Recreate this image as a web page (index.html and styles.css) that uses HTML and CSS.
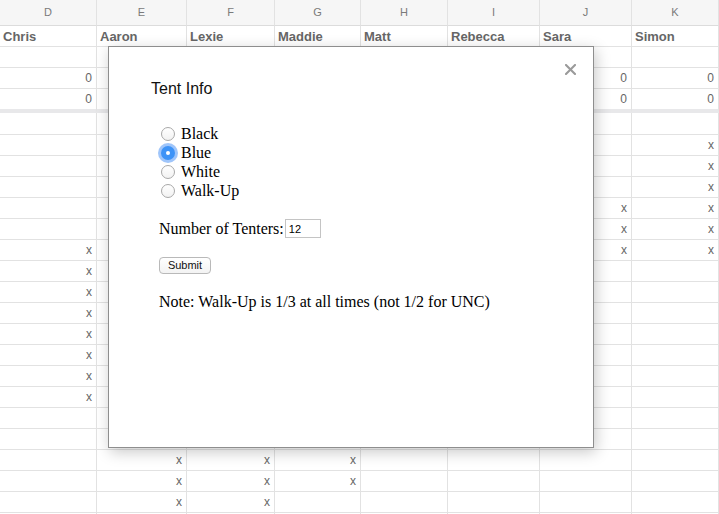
FILE: index.html
```html
<!DOCTYPE html>
<html>
<head>
<meta charset="utf-8">
<link rel="stylesheet" href="styles.css">
</head>
<body>
<div class="sheet">
  <div class="row head">
    <div class="c">D</div><div class="c">E</div><div class="c">F</div><div class="c">G</div><div class="c">H</div><div class="c">I</div><div class="c">J</div><div class="c">K</div>
  </div>
  <div class="row names">
    <div class="c">Chris</div><div class="c">Aaron</div><div class="c">Lexie</div><div class="c">Maddie</div><div class="c">Matt</div><div class="c">Rebecca</div><div class="c">Sara</div><div class="c">Simon</div>
  </div>
  <div class="row"><div class="c"></div><div class="c"></div><div class="c"></div><div class="c"></div><div class="c"></div><div class="c"></div><div class="c"></div><div class="c"></div></div>
  <div class="row"><div class="c">0</div><div class="c"></div><div class="c"></div><div class="c"></div><div class="c"></div><div class="c"></div><div class="c">0</div><div class="c">0</div></div>
  <div class="row band"><div class="c">0</div><div class="c"></div><div class="c"></div><div class="c"></div><div class="c"></div><div class="c"></div><div class="c">0</div><div class="c">0</div></div>
  <div class="row tall"><div class="c"></div><div class="c"></div><div class="c"></div><div class="c"></div><div class="c"></div><div class="c"></div><div class="c"></div><div class="c"></div></div>
  <div class="row"><div class="c"></div><div class="c"></div><div class="c"></div><div class="c"></div><div class="c"></div><div class="c"></div><div class="c"></div><div class="c">x</div></div>
  <div class="row"><div class="c"></div><div class="c"></div><div class="c"></div><div class="c"></div><div class="c"></div><div class="c"></div><div class="c"></div><div class="c">x</div></div>
  <div class="row"><div class="c"></div><div class="c"></div><div class="c"></div><div class="c"></div><div class="c"></div><div class="c"></div><div class="c"></div><div class="c">x</div></div>
  <div class="row"><div class="c"></div><div class="c"></div><div class="c"></div><div class="c"></div><div class="c"></div><div class="c"></div><div class="c">x</div><div class="c">x</div></div>
  <div class="row"><div class="c"></div><div class="c"></div><div class="c"></div><div class="c"></div><div class="c"></div><div class="c"></div><div class="c">x</div><div class="c">x</div></div>
  <div class="row"><div class="c">x</div><div class="c"></div><div class="c"></div><div class="c"></div><div class="c"></div><div class="c"></div><div class="c">x</div><div class="c">x</div></div>
  <div class="row"><div class="c">x</div><div class="c"></div><div class="c"></div><div class="c"></div><div class="c"></div><div class="c"></div><div class="c"></div><div class="c"></div></div>
  <div class="row"><div class="c">x</div><div class="c"></div><div class="c"></div><div class="c"></div><div class="c"></div><div class="c"></div><div class="c"></div><div class="c"></div></div>
  <div class="row"><div class="c">x</div><div class="c"></div><div class="c"></div><div class="c"></div><div class="c"></div><div class="c"></div><div class="c"></div><div class="c"></div></div>
  <div class="row"><div class="c">x</div><div class="c"></div><div class="c"></div><div class="c"></div><div class="c"></div><div class="c"></div><div class="c"></div><div class="c"></div></div>
  <div class="row"><div class="c">x</div><div class="c"></div><div class="c"></div><div class="c"></div><div class="c"></div><div class="c"></div><div class="c"></div><div class="c"></div></div>
  <div class="row"><div class="c">x</div><div class="c"></div><div class="c"></div><div class="c"></div><div class="c"></div><div class="c"></div><div class="c"></div><div class="c"></div></div>
  <div class="row"><div class="c">x</div><div class="c"></div><div class="c"></div><div class="c"></div><div class="c"></div><div class="c"></div><div class="c"></div><div class="c"></div></div>
  <div class="row"><div class="c"></div><div class="c"></div><div class="c"></div><div class="c"></div><div class="c"></div><div class="c"></div><div class="c"></div><div class="c"></div></div>
  <div class="row"><div class="c"></div><div class="c"></div><div class="c"></div><div class="c"></div><div class="c"></div><div class="c"></div><div class="c"></div><div class="c"></div></div>
  <div class="row"><div class="c"></div><div class="c">x</div><div class="c">x</div><div class="c">x</div><div class="c"></div><div class="c"></div><div class="c"></div><div class="c"></div></div>
  <div class="row"><div class="c"></div><div class="c">x</div><div class="c">x</div><div class="c">x</div><div class="c"></div><div class="c"></div><div class="c"></div><div class="c"></div></div>
  <div class="row"><div class="c"></div><div class="c">x</div><div class="c">x</div><div class="c"></div><div class="c"></div><div class="c"></div><div class="c"></div><div class="c"></div></div>
  <div class="row"><div class="c"></div><div class="c"></div><div class="c"></div><div class="c"></div><div class="c"></div><div class="c"></div><div class="c"></div><div class="c"></div></div>
</div>

<div class="modal">
  <button class="close" aria-label="Close">
    <svg width="11" height="11" viewBox="0 0 11 11"><path d="M1 1L10 10M10 1L1 10" stroke="#9a9a9a" stroke-width="2.1" stroke-linecap="square"/></svg>
  </button>
  <div class="title">Tent Info</div>
  <form class="content">
    <label class="opt"><input type="radio" name="tent"> Black</label>
    <label class="opt"><input type="radio" name="tent" checked> Blue</label>
    <label class="opt"><input type="radio" name="tent"> White</label>
    <label class="opt"><input type="radio" name="tent"> Walk-Up</label>
    <div class="num">Number of Tenters:<input class="field" type="text" value="12"></div>
    <button type="button" class="submit">Submit</button>
    <p class="note">Note: Walk-Up is 1/3 at all times (not 1/2 for UNC)</p>
  </form>
</div>
</body>
</html>
```
FILE: styles.css
```css
html, body {
  margin: 0;
  padding: 0;
  background: #fff;
  overflow: hidden;
  width: 719px;
  height: 514px;
}
.sheet {
  font-family: "Liberation Sans", Arial, sans-serif;
  width: 719px;
  overflow: hidden;
}
.row {
  display: grid;
  grid-template-columns: 97px 90px 88px 86px 87px 92px 92px 87px;
  height: 21px;
}
.c {
  box-sizing: border-box;
  border-right: 1px solid #e2e2e2;
  border-bottom: 1px solid #e2e2e2;
  font-size: 12px;
  color: #666;
  text-align: right;
  padding-right: 4px;
  line-height: 21px;
  overflow: hidden;
  white-space: nowrap;
}
.row.band .c {
  border-bottom: 4px solid #e8e8ea;
}
.row.band { height: 24px; }
.row.tall { height: 22px; }
.row.head { height: 26px; }
.row.head .c {
  background: #f6f6f6;
  text-align: center;
  padding: 0;
  font-size: 11px;
  color: #7a7a7a;
  line-height: 25px;
  border-bottom-color: #dcdcdc;
}
.row.names .c {
  text-align: left;
  padding: 1px 0 0 3px;
  font-weight: bold;
  font-size: 13px;
  color: #666;
  line-height: 20px;
}

.modal {
  position: absolute;
  left: 108px;
  top: 46px;
  background: #fff;
  border: 1px solid #8e8e8e;
  box-shadow: 2px 4px 14px rgba(0, 0, 0, 0.22);
  padding: 32px 0 0 42px;
  box-sizing: content-box;
  width: 442px;
  height: 368px;
}
.close {
  position: absolute;
  right: 17px;
  top: 17px;
  width: 11px;
  height: 11px;
  padding: 0;
  border: 0;
  background: none;
  display: block;
}
.close svg { display: block; }
.title {
  font-family: "Liberation Sans", Arial, sans-serif;
  font-size: 16px;
  line-height: 20px;
  color: #111;
}
.content {
  margin: 25px 0 0 8px;
  font-family: "Liberation Serif", "Times New Roman", serif;
  font-size: 16px;
  color: #000;
  display: flex;
  flex-direction: column;
  align-items: flex-start;
}
.opt {
  display: flex;
  align-items: center;
  height: 19px;
  line-height: 19px;
}
.opt input {
  appearance: none;
  -webkit-appearance: none;
  margin: 0 6px 0 2px;
  width: 14px;
  height: 14px;
  border-radius: 50%;
  border: 1px solid #a8a8a8;
  background: linear-gradient(#fff, #f2f2f2);
  box-sizing: border-box;
  position: relative;
}
.opt input:checked {
  border: 0;
  background: #3d93f7;
  box-shadow: 0 0 0 3px rgba(80, 150, 245, 0.55);
}
.opt input:checked::after {
  content: "";
  position: absolute;
  left: 5px;
  top: 5px;
  width: 4px;
  height: 4px;
  border-radius: 50%;
  background: #fff;
}
.num {
  margin-top: 19px;
  display: flex;
  align-items: center;
  height: 19px;
}
.field {
  margin: 0 0 0 1px;
  width: 36px;
  height: 19px;
  box-sizing: border-box;
  border: 1px solid #c4c4c4;
  padding: 0 3px;
  font-family: "Liberation Sans", Arial, sans-serif;
  font-size: 11px;
  color: #000;
  outline: none;
}
.submit {
  margin-top: 19px;
  width: 52px;
  height: 17px;
  padding: 0;
  border: 1px solid #b9b9b9;
  border-radius: 4px;
  background: linear-gradient(#ffffff, #f3f3f3);
  font-family: "Liberation Sans", Arial, sans-serif;
  font-size: 11px;
  color: #111;
  line-height: 15px;
}
.note {
  margin: 18px 0 0 0;
  line-height: 19px;
}
```
